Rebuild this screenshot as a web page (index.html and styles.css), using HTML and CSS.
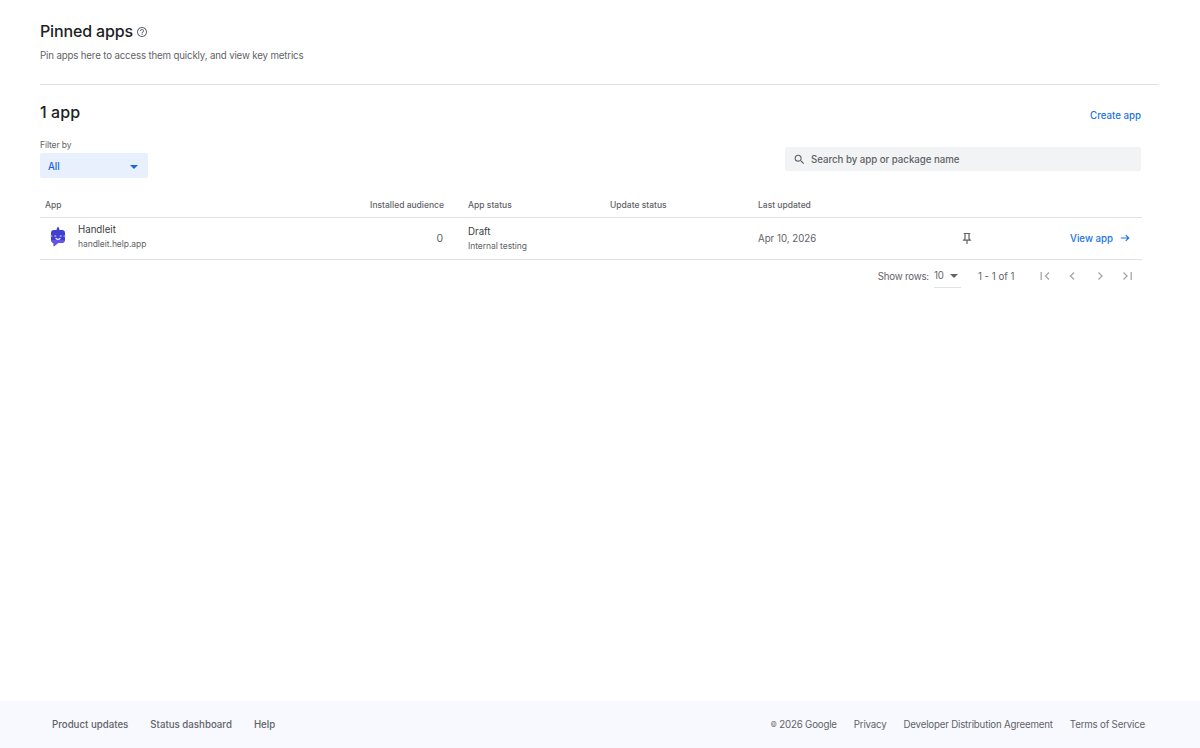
FILE: index.html
```html
<!DOCTYPE html>
<html lang="en">
<head>
  <meta charset="UTF-8" />
  <meta name="viewport" content="width=device-width, initial-scale=1.0" />
  <title>Pinned apps</title>
  <link rel="stylesheet" href="styles.css">
</head>
<body>
  <main class="content">
    <!-- Pinned apps -->
    <header class="pinned">
      <div class="title-row">
        <h1>Pinned apps</h1>
        <svg class="help-icon" viewBox="0 0 24 24"><path d="M11 18h2v-2h-2v2zm1-16C6.480 2 2 6.480 2 12s4.480 10 10 10 10-4.480 10-10S17.520 2 12 2zm0 18c-4.410 0-8-3.590-8-8s3.590-8 8-8 8 3.590 8 8-3.590 8-8 8zm0-14c-2.210 0-4 1.790-4 4h2c0-1.100.9-2 2-2s2 .9 2 2c0 2-3 1.750-3 5h2c0-2.250 3-2.500 3-5 0-2.210-1.790-4-4-4z"/></svg>
      </div>
      <p class="subtitle">Pin apps here to access them quickly, and view key metrics</p>
    </header>

    <!-- App list -->
    <section class="apps">
      <div class="apps-header">
        <h2>1 app</h2>
        <a class="create-link">Create app</a>
      </div>

      <div class="toolbar">
        <div class="filter">
          <span class="filter-label">Filter by</span>
          <div class="filter-select">
            <span>All</span>
            <span class="caret"></span>
          </div>
        </div>
        <div class="search">
          <svg class="search-icon" viewBox="0 0 24 24"><path d="M15.500 14h-.79l-.28-.27A6.470 6.470 0 0 0 16 9.500 6.500 6.500 0 1 0 9.500 16c1.610 0 3.090-.59 4.230-1.570l.27.28v.79l5 4.990L20.490 19l-4.990-5zm-6 0C7.010 14 5 11.990 5 9.500S7.010 5 9.500 5 14 7.010 14 9.500 11.990 14 9.500 14z"/></svg>
          <span class="search-text">Search by app or package name</span>
        </div>
      </div>

      <table class="app-table">
        <thead>
          <tr>
            <th class="col-app">App</th>
            <th class="col-audience">Installed audience</th>
            <th class="col-status">App status</th>
            <th class="col-update">Update status</th>
            <th class="col-date">Last updated</th>
            <th class="col-pin"></th>
            <th class="col-view"></th>
          </tr>
        </thead>
        <tbody>
          <tr>
            <td class="col-app">
              <div class="app-cell">
                <svg class="app-icon" viewBox="0 0 16 20">
                  <path fill="#403fd0" d="M7.200.3h1.600L9.500 3H12c2 0 3 1.200 3 3v6.500c0 2.200-1.200 3.500-3.500 3.500H8l-4.200 3.500L3.500 16C1.800 15.500 1 14.300 1 12.500V6c0-1.800 1-3 3-3h2.500z"/>
                  <path fill="#6452ea" d="M1.200 13h13.600c-.3 2-1.400 3-3.300 3H8l-4.200 3.500L3.500 16c-1.300-.4-2.100-1.400-2.300-3z"/>
                  <path fill="none" stroke="#e4e6ff" stroke-width="1.200" stroke-linecap="round" d="M4.800 9h1M10.200 9h1M6 11.500c1 1.200 3 1.200 4 0"/>
                  <path fill="#a9b2ff" d="M.6 8.500h1.800v1.200H.6zM13.600 8.500h1.800v1.200h-1.800z"/>
                </svg>
                <div>
                  <div class="primary">Handleit</div>
                  <div class="secondary">handleit.help.app</div>
                </div>
              </div>
            </td>
            <td class="col-audience count">0</td>
            <td class="col-status">
              <div class="status">
                <div class="primary">Draft</div>
                <div class="secondary">Internal testing</div>
              </div>
            </td>
            <td class="col-update"></td>
            <td class="col-date">Apr 10, 2026</td>
            <td class="col-pin">
              <svg class="pin-icon" viewBox="0 0 10 13"><path d="M1.800 1.500h6.400M3 1.500v5.200L1.800 8.200h6.400L7 6.700V1.500M5 8.200V12"/></svg>
            </td>
            <td class="col-view">
              <a class="view-link"><span>View app</span><svg class="arrow-icon" viewBox="0 0 10 8"><path d="M.8 4h7.900M5.800 1.100L8.700 4 5.800 6.900"/></svg></a>
            </td>
          </tr>
        </tbody>
      </table>

      <div class="paginator">
        <span class="rows-label">Show rows:</span>
        <div class="rows-select"><span>10</span><span class="caret"></span></div>
        <span class="range">1 - 1 of 1</span>
        <div class="page-buttons">
          <svg viewBox="0 0 12 12"><path d="M2.200 2v8M10 2.500L6.500 6l3.500 3.500"/></svg>
          <svg viewBox="0 0 12 12"><path d="M8 2.500L4.500 6 8 9.500"/></svg>
          <svg viewBox="0 0 12 12"><path d="M4.500 2.500L8 6 4.500 9.500"/></svg>
          <svg viewBox="0 0 12 12"><path d="M2.500 2.500L6 6 2.500 9.500M10.200 2v8"/></svg>
        </div>
      </div>
    </section>
  </main>

  <footer class="footer">
    <nav class="footer-links">
      <a>Product updates</a>
      <a>Status dashboard</a>
      <a>Help</a>
    </nav>
    <div class="legal">
      <span><span class="copy-mark">©</span> 2026 Google</span>
      <a>Privacy</a>
      <a>Developer Distribution Agreement</a>
      <a>Terms of Service</a>
    </div>
  </footer>
</body>
</html>
```

FILE: styles.css
```css
* {
  box-sizing: border-box;
}

body {
  margin: 0;
  min-height: 100vh;
  display: flex;
  flex-direction: column;
  font-family: Inter, "Open Sans", sans-serif;
  font-size: 9.7px;
  line-height: 14px;
  color: #5f6368;
  background: #fff;
}

h1,
h2,
p {
  margin: 0;
}

h1,
h2 {
  font-size: 16px;
  font-weight: 500;
  line-height: 22px;
  letter-spacing: -0.15px;
  color: #202124;
}

.content {
  flex: 1;
  padding: 20px 41px 0 40px;
}

.pinned {
  height: 65px;
  border-bottom: 1px solid #e0e2e4;
}

.title-row {
  display: flex;
  align-items: center;
  gap: 3px;
}

.help-icon {
  width: 12px;
  height: 12px;
  margin-top: 2px;
  fill: #6b6f74;
}

.subtitle {
  margin-top: 7px;
  letter-spacing: -0.15px;
}

.apps {
  width: 1102px;
  padding-top: 16px;
}

.apps h2 {
  letter-spacing: 0.1px;
}

.apps-header {
  display: flex;
  justify-content: space-between;
  height: 37px;
}

.create-link {
  padding: 8px 1px 0 0;
}

.create-link,
.view-link {
  color: #1a73e8;
  font-weight: 500;
}

.toolbar {
  display: flex;
  justify-content: space-between;
  align-items: flex-start;
}

.filter-label {
  display: block;
  font-size: 8.5px;
  letter-spacing: -0.1px;
}

.filter-select {
  display: flex;
  align-items: center;
  justify-content: space-between;
  width: 108px;
  height: 25px;
  margin-top: 1px;
  padding: 2px 10px 0 8px;
  border-radius: 2px;
  background: #e8f0fe;
  color: #1967d2;
  font-weight: 500;
}

.caret {
  border: 4px solid transparent;
  border-top-color: currentColor;
  border-bottom: 0;
}

.search {
  display: flex;
  align-items: center;
  gap: 5px;
  width: 356px;
  height: 24px;
  margin: 9px 1px 0 0;
  padding-left: 8px;
  border-radius: 2px;
  background: #f1f3f4;
  font-weight: 500;
}

.search-icon {
  width: 13px;
  height: 13px;
  fill: #5f6368;
}

.search-text {
  padding-top: 2px;
  letter-spacing: -0.03px;
}

.app-table {
  width: 1102px;
  margin-top: 13px;
  table-layout: fixed;
  border-collapse: collapse;
}

.app-table th {
  height: 26px;
  padding: 2px 0 0;
  border-bottom: 1px solid #e0e2e4;
  font-size: 8.5px;
  font-weight: 500;
  text-align: left;
}

.app-table td {
  height: 42px;
  padding: 1px 0 0;
  border-bottom: 1px solid #e0e2e4;
}

.app-table .col-app {
  width: 300px;
  padding-left: 5px;
}

.app-table .col-audience {
  width: 128px;
  padding-right: 24px;
  text-align: right;
}

.app-table .count {
  padding-right: 25px;
  font-size: 10.5px;
}

.col-status {
  width: 142px;
}

.status {
  padding-top: 1px;
}

.status .secondary {
  line-height: 15px;
}

.col-update {
  width: 148px;
}

.col-date {
  width: 187px;
}

.col-pin {
  width: 48px;
}

.primary {
  color: #3c4043;
}

.secondary {
  font-size: 8.5px;
  letter-spacing: -0.05px;
}

.app-cell {
  display: flex;
  align-items: center;
  gap: 12px;
  margin-top: -3px;
  padding-left: 5px;
}

.app-icon {
  width: 16px;
  height: 20px;
}

.pin-icon {
  display: block;
  width: 10px;
  height: 13px;
  margin-left: 17px;
  fill: none;
  stroke: #5f6368;
  stroke-width: 1.2;
}

.view-link {
  display: flex;
  align-items: center;
  justify-content: flex-end;
  gap: 7px;
  padding-right: 12px;
}

.arrow-icon {
  width: 10px;
  height: 8px;
  margin-top: -1px;
  fill: none;
  stroke: currentColor;
  stroke-width: 1.2;
}

.paginator {
  display: flex;
  align-items: center;
  justify-content: flex-end;
  height: 33px;
  padding-right: 1px;
}

.rows-label {
  padding-top: 1px;
  letter-spacing: -0.2px;
}

.rows-select {
  display: flex;
  align-items: center;
  justify-content: space-between;
  width: 27px;
  height: 24px;
  margin: 0 17px 0 5px;
  padding: 1px 3px 0 0;
  border-bottom: 1px solid #e0e2e4;
}

.range {
  padding-top: 1px;
}

.page-buttons {
  display: flex;
  gap: 15.5px;
  margin: 0 8px 0 24px;
}

.page-buttons svg {
  width: 12px;
  height: 12px;
  fill: none;
  stroke: #a3a6aa;
  stroke-width: 1.3;
}

.footer {
  display: flex;
  align-items: center;
  justify-content: space-between;
  height: 47px;
  padding: 1px 55px 0 52px;
  background: #f8f9fe;
}

.footer-links {
  display: flex;
  gap: 22px;
  font-weight: 500;
}

.legal {
  display: flex;
  gap: 17px;
  letter-spacing: -0.18px;
}

.copy-mark {
  font-size: 7px;
  vertical-align: 1px;
}
```
